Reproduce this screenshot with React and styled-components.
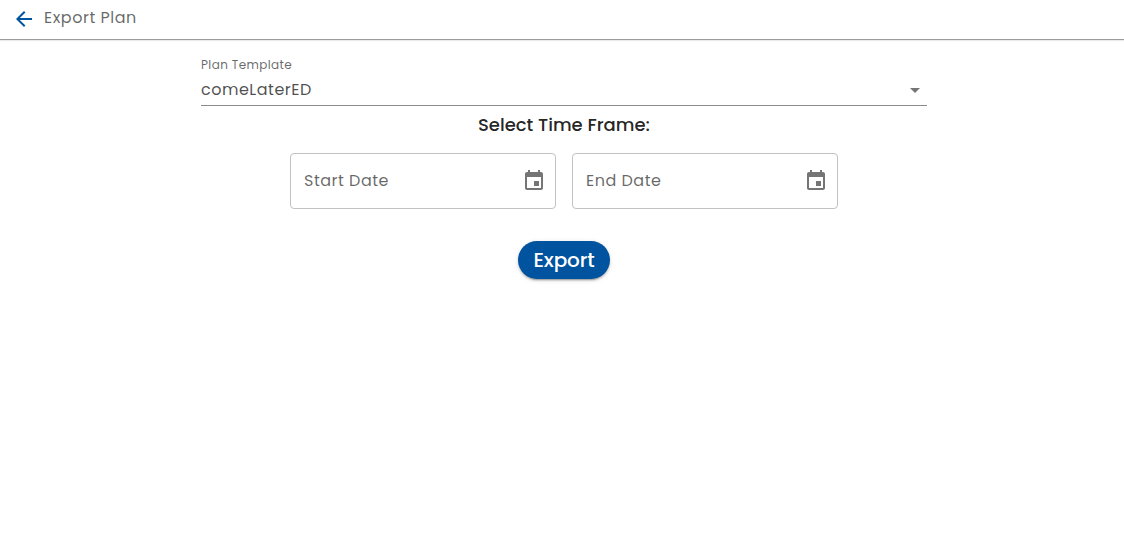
import React from "react";
import styled, { createGlobalStyle } from "styled-components";

const GlobalStyle = createGlobalStyle`
  * { box-sizing: border-box; }
  body {
    margin: 0;
    background: #fff;
    font-family: Poppins, Inter, sans-serif;
    font-size: 16px;
    color: rgba(0, 0, 0, 0.87);
  }
`;

const Page = styled.div`
  min-height: 555px;
  background: #fff;
`;

const Header = styled.header`
  display: flex;
  align-items: center;
  height: 40px;
  padding: 0 12px 2px;
  border-bottom: 1px solid #9b9b9b;
  box-shadow: 0 1px 1px rgba(0, 0, 0, 0.08);
`;

const BackButton = styled.button`
  display: flex;
  padding: 0;
  border: 0;
  background: none;
  color: #00539f;
`;

const Title = styled.h1`
  margin: 0 0 2px 8px;
  font-size: 16px;
  font-weight: 400;
  line-height: 24px;
  letter-spacing: 0.03125em;
  color: rgba(0, 0, 0, 0.6);
`;

const Form = styled.main`
  display: flex;
  flex-direction: column;
  align-items: center;
  padding: 17px 0 0 4px;
`;

const Select = styled.div`
  width: 726px;
  height: 49px;
  border-bottom: 1px solid #8c8c8c;
`;

const SelectLabel = styled.div`
  height: 16px;
  font-size: 12px;
  font-weight: 400;
  line-height: 16px;
  letter-spacing: 0.03125em;
  color: rgba(0, 0, 0, 0.6);
`;

const SelectValue = styled.div`
  display: flex;
  align-items: center;
  justify-content: space-between;
  height: 34px;
  font-weight: 400;
  letter-spacing: 0.03125em;
  line-height: 34px;
  color: rgba(0, 0, 0, 0.7);
`;

const Caret = styled.svg`
  width: 24px;
  height: 24px;
  fill: #757575;
`;

const Heading = styled.h2`
  margin: 5px 0 14px;
  font-size: 18px;
  font-weight: 500;
  line-height: 28px;
`;

const Dates = styled.div`
  display: flex;
  gap: 16px;
`;

const DateField = styled.div`
  display: flex;
  align-items: center;
  justify-content: space-between;
  width: 266px;
  height: 56px;
  padding: 0 9px 0 13px;
  border: 1px solid #c2c2c2;
  border-radius: 4px;
`;

const DateLabel = styled.span`
  font-weight: 400;
  line-height: 24px;
  letter-spacing: 0.03125em;
  color: rgba(0, 0, 0, 0.6);
`;

const CalendarIcon = styled.svg`
  width: 24px;
  height: 24px;
  fill: #757575;
`;

const ExportButton = styled.button`
  display: flex;
  align-items: center;
  justify-content: center;
  width: 92px;
  height: 38px;
  margin-top: 32px;
  padding: 0;
  border: 0;
  border-radius: 19px;
  background: #00539f;
  color: #fff;
  font-family: inherit;
  font-size: 20px;
  font-weight: 500;
  line-height: 38px;
  letter-spacing: -0.15px;
  box-shadow: 0 3px 1px -2px rgba(0, 0, 0, 0.2), 0 2px 2px rgba(0, 0, 0, 0.14),
    0 1px 5px rgba(0, 0, 0, 0.12);
`;

function DateInput({ label }) {
  return (
    <DateField>
      <DateLabel>{label}</DateLabel>
      <CalendarIcon viewBox="0 0 24 24">
        <path d="M17 12h-5v5h5v-5zM16 1v2H8V1H6v2H5c-1.11 0-1.99.9-1.99 2L3 19c0 1.1.89 2 2 2h14c1.1 0 2-.9 2-2V5c0-1.1-.9-2-2-2h-1V1h-2zm3 18H5V8h14v11z" />
      </CalendarIcon>
    </DateField>
  );
}

export default function App() {
  return (
    <Page>
      <GlobalStyle />
      <Header>
        <BackButton aria-label="Back">
          <svg width="24" height="24" viewBox="0 0 24 24" fill="currentColor">
            <path d="M20 11H7.83l5.59-5.59L12 4l-8 8 8 8 1.41-1.41L7.83 13H20v-2z" />
          </svg>
        </BackButton>
        <Title>Export Plan</Title>
      </Header>
      <Form>
        <Select>
          <SelectLabel>Plan Template</SelectLabel>
          <SelectValue>
            comeLaterED
            <Caret viewBox="0 0 24 24">
              <path d="M7 10l5 5 5-5z" />
            </Caret>
          </SelectValue>
        </Select>
        <Heading>Select Time Frame:</Heading>
        <Dates>
          <DateInput label="Start Date" />
          <DateInput label="End Date" />
        </Dates>
        <ExportButton>Export</ExportButton>
      </Form>
    </Page>
  );
}
